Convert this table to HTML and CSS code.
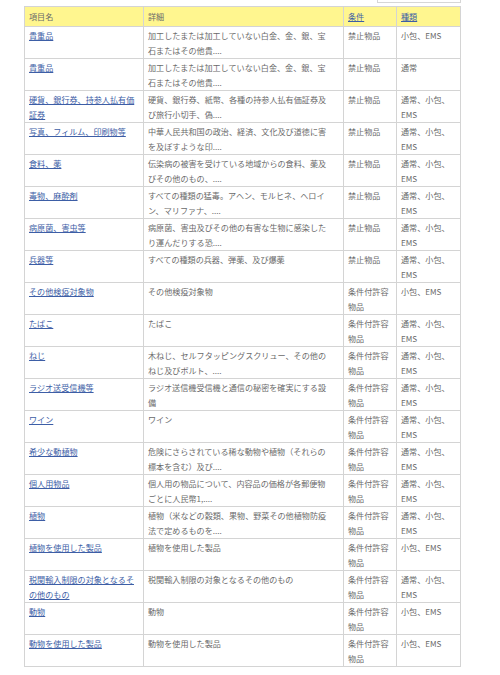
FILE: index.html
```html
<!DOCTYPE html>
<html lang="ja">
<head>
<meta charset="utf-8">
<title>禁止・制限物品</title>
<link rel="stylesheet" href="styles.css">
</head>
<body>
<div class="page">
  <div class="toolbar"><div class="search-box"></div></div>
  <table class="items">
    <colgroup>
      <col class="c-name"><col class="c-detail"><col class="c-cond"><col class="c-type">
    </colgroup>
    <thead>
      <tr><th>項目名</th><th>詳細</th><th><a href="#">条件</a></th><th><a href="#">種類</a></th></tr>
    </thead>
    <tbody>
      <tr><td><a href="#">貴重品</a></td><td class="detail">加工したまたは加工していない白金、金、銀、宝石またはその他貴....</td><td>禁止物品</td><td>小包、EMS</td></tr>
      <tr><td><a href="#">貴重品</a></td><td class="detail">加工したまたは加工していない白金、金、銀、宝石またはその他貴....</td><td>禁止物品</td><td>通常</td></tr>
      <tr><td><a href="#">硬貨、銀行券、持参人払有価証券</a></td><td class="detail">硬貨、銀行券、紙幣、各種の持参人払有価証券及び旅行小切手、偽....</td><td>禁止物品</td><td>通常、小包、EMS</td></tr>
      <tr><td><a href="#">写真、フィルム、印刷物等</a></td><td class="detail">中華人民共和国の政治、経済、文化及び道徳に害を及ぼすような印....</td><td>禁止物品</td><td>通常、小包、EMS</td></tr>
      <tr><td><a href="#">食料、薬</a></td><td class="detail">伝染病の被害を受けている地域からの食料、薬及びその他のもの、....</td><td>禁止物品</td><td>通常、小包、EMS</td></tr>
      <tr><td><a href="#">毒物、麻酔剤</a></td><td class="detail">すべての種類の猛毒。アヘン、モルヒネ、ヘロイン、マリファナ、....</td><td>禁止物品</td><td>通常、小包、EMS</td></tr>
      <tr><td><a href="#">病原菌、害虫等</a></td><td class="detail">病原菌、害虫及びその他の有害な生物に感染したり運んだりする恐....</td><td>禁止物品</td><td>通常、小包、EMS</td></tr>
      <tr><td><a href="#">兵器等</a></td><td class="detail">すべての種類の兵器、弾薬、及び爆薬</td><td>禁止物品</td><td>通常、小包、EMS</td></tr>
      <tr><td><a href="#">その他検疫対象物</a></td><td class="detail">その他検疫対象物</td><td>条件付許容物品</td><td>小包、EMS</td></tr>
      <tr><td><a href="#">たばこ</a></td><td class="detail">たばこ</td><td>条件付許容物品</td><td>通常、小包、EMS</td></tr>
      <tr><td><a href="#">ねじ</a></td><td class="detail">木ねじ、セルフタッピングスクリュー、その他のねじ及びボルト、....</td><td>条件付許容物品</td><td>通常、小包、EMS</td></tr>
      <tr><td><a href="#">ラジオ送受信機等</a></td><td class="detail">ラジオ送信機受信機と通信の秘密を確実にする設備</td><td>条件付許容物品</td><td>通常、小包、EMS</td></tr>
      <tr><td><a href="#">ワイン</a></td><td class="detail">ワイン</td><td>条件付許容物品</td><td>通常、小包、EMS</td></tr>
      <tr><td><a href="#">希少な動植物</a></td><td class="detail">危険にさらされている稀な動物や植物（それらの標本を含む）及び....</td><td>条件付許容物品</td><td>通常、小包、EMS</td></tr>
      <tr><td><a href="#">個人用物品</a></td><td class="detail">個人用の物品について、内容品の価格が各郵便物ごとに人民幣1,....</td><td>条件付許容物品</td><td>通常、小包、EMS</td></tr>
      <tr><td><a href="#">植物</a></td><td class="detail">植物（米などの穀類、果物、野菜その他植物防疫法で定めるものを....</td><td>条件付許容物品</td><td>通常、小包、EMS</td></tr>
      <tr><td><a href="#">植物を使用した製品</a></td><td class="detail">植物を使用した製品</td><td>条件付許容物品</td><td>小包、EMS</td></tr>
      <tr><td><a href="#">税関輸入制限の対象となるその他のもの</a></td><td class="detail">税関輸入制限の対象となるその他のもの</td><td>条件付許容物品</td><td>通常、小包、EMS</td></tr>
      <tr><td><a href="#">動物</a></td><td class="detail">動物</td><td>条件付許容物品</td><td>小包、EMS</td></tr>
      <tr><td><a href="#">動物を使用した製品</a></td><td class="detail">動物を使用した製品</td><td>条件付許容物品</td><td>小包、EMS</td></tr>
    </tbody>
  </table>
</div>
</body>
</html>
```

FILE: styles.css
```css
html, body {
  margin: 0;
  padding: 0;
  background: #ffffff;
}

body {
  font-family: "Noto Sans CJK JP", "Noto Sans", sans-serif;
  font-size: 8.1px;
  color: #6a6a6a;
}

.page {
  width: 437px;
  margin-left: 24px;
}

.toolbar {
  display: flex;
  justify-content: flex-end;
  height: 6px;
}

.search-box {
  width: 82px;
  height: 2px;
  border: 1px solid #d6d6d6;
  border-top: none;
  background: #ffffff;
}

.items {
  width: 437px;
  border-collapse: collapse;
  table-layout: fixed;
}

.c-name { width: 119px; }
.c-detail { width: 200px; }
.c-cond { width: 53px; }
.c-type { width: 64px; }

.items th,
.items td {
  border: 1px solid #d4d4d4;
  text-align: left;
  vertical-align: top;
  font-weight: normal;
  line-height: 14.5px;
}

.items th {
  background: #fff68f;
  height: 15px;
  padding: 2px 4px 2px 4px;
  line-height: 15px;
  color: #6a6a6a;
}

.items td {
  height: 29px;
  padding: 2px 2px 0 4px;
}

.items td.detail {
  padding-right: 10px;
}

.items a {
  color: #3d5ea6;
  text-decoration: underline;
}
```
